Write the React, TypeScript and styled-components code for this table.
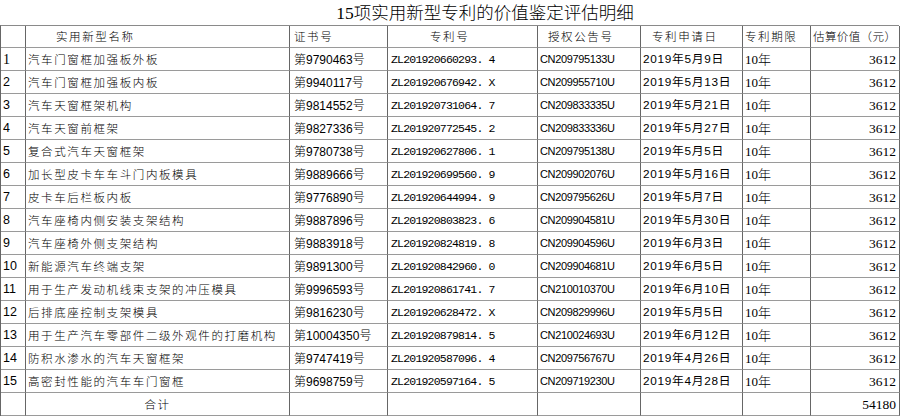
import React from 'react';
import styled, { createGlobalStyle, css } from 'styled-components';

const GlobalStyle = createGlobalStyle`
  html, body {
    margin: 0;
    padding: 0;
    background: #fff;
  }
  body {
    font-family: "Liberation Sans", "Noto Sans CJK SC", sans-serif;
    color: #000;
  }
`;

const Sheet = styled.div`
  width: 900px;
  height: 416px;
  overflow: hidden;
  background: #fff;
`;

const Title = styled.div`
  height: 25px;
  display: flex;
  align-items: center;
  justify-content: center;
  padding-left: 70px;
  padding-top: 2px;
  box-sizing: border-box;
  font-family: "Liberation Serif", "Noto Sans CJK SC", serif;
  font-size: 17.5px;
  font-weight: 300;
  line-height: 1;
`;

const Grid = styled.div`
  display: grid;
  grid-template-columns: 25px 264px 98px 150px 103px 102px 68px 89px;
  grid-template-rows: 22px;
  grid-auto-rows: 23px;
  border-top: 1px solid #8a8a8a;
  border-left: 1px solid #666;
  width: 899px;
  box-sizing: border-box;
`;

type Kind = 'idx' | 'idxSerif' | 'name' | 'cert' | 'mono' | 'cn' | 'date' | 'term' | 'value' | 'head';

const fontFor = (kind: Kind) => {
  switch (kind) {
    case 'idxSerif':
      return css`
        font-family: "Liberation Serif", serif;
        font-size: 14px;
      `;
    case 'idx':
      return css`
        font-size: 12.5px;
      `;
    case 'name':
    case 'head':
      return css`
        font-family: "Noto Sans CJK SC", sans-serif;
        font-size: 11.5px;
        font-weight: 300;
        letter-spacing: 1.6px;
      `;
    case 'cert':
      return css`
        font-size: 12px;
        font-weight: 300;
      `;
    case 'mono':
      return css`
        font-family: "Liberation Mono", monospace;
        font-size: 11.5px;
        letter-spacing: -0.8px;
      `;
    case 'cn':
      return css`
        font-size: 11px;
        letter-spacing: -0.35px;
      `;
    case 'date':
      return css`
        font-size: 11.8px;
        letter-spacing: 0.7px;
      `;
    case 'term':
      return css`
        font-family: "Liberation Serif", "Noto Sans CJK SC", serif;
        font-size: 13px;
        font-weight: 300;
      `;
    case 'value':
      return css`
        font-family: "Liberation Serif", serif;
        font-size: 13.5px;
      `;
  }
};

const Cell = styled.div<{ $kind: Kind; $align?: 'left' | 'right' | 'center'; $indent?: number }>`
  box-sizing: border-box;
  border-right: 1px solid #666;
  border-bottom: 1px solid #9a9a9a;
  display: flex;
  align-items: center;
  justify-content: ${p => (p.$align === 'right' ? 'flex-end' : p.$align === 'center' ? 'center' : 'flex-start')};
  padding: 1px ${p => (p.$align === 'right' ? 3 : 2)}px 0 ${p => p.$indent ?? 2}px;
  white-space: nowrap;
  overflow: hidden;
  line-height: 1;
  ${p => fontFor(p.$kind)}
`;

type Row = [string, string, string, string, string, string];

const rows: Row[] = [
  ['汽车门窗框加强板外板', '第9790463号', 'ZL201920660293. 4', 'CN209795133U', '2019年5月9日', '10年'],
  ['汽车门窗框加强板内板', '第9940117号', 'ZL201920676942. X', 'CN209955710U', '2019年5月13日', '10年'],
  ['汽车天窗框架机构', '第9814552号', 'ZL201920731064. 7', 'CN209833335U', '2019年5月21日', '10年'],
  ['汽车天窗前框架', '第9827336号', 'ZL201920772545. 2', 'CN209833336U', '2019年5月27日', '10年'],
  ['复合式汽车天窗框架', '第9780738号', 'ZL201920627806. 1', 'CN209795138U', '2019年5月5日', '10年'],
  ['加长型皮卡车车斗门内板模具', '第9889666号', 'ZL201920699560. 9', 'CN209902076U', '2019年5月16日', '10年'],
  ['皮卡车后栏板内板', '第9776890号', 'ZL201920644994. 9', 'CN209795626U', '2019年5月7日', '10年'],
  ['汽车座椅内侧安装支架结构', '第9887896号', 'ZL201920803823. 6', 'CN209904581U', '2019年5月30日', '10年'],
  ['汽车座椅外侧支架结构', '第9883918号', 'ZL201920824819. 8', 'CN209904596U', '2019年6月3日', '10年'],
  ['新能源汽车终端支架', '第9891300号', 'ZL201920842960. 0', 'CN209904681U', '2019年6月5日', '10年'],
  ['用于生产发动机线束支架的冲压模具', '第9996593号', 'ZL201920861741. 7', 'CN210010370U', '2019年6月10日', '10年'],
  ['后排底座控制支架模具', '第9816230号', 'ZL201920628472. X', 'CN209829996U', '2019年5月5日', '10年'],
  ['用于生产汽车零部件二级外观件的打磨机构', '第10004350号', 'ZL201920879814. 5', 'CN210024693U', '2019年6月12日', '10年'],
  ['防积水渗水的汽车天窗框架', '第9747419号', 'ZL201920587096. 4', 'CN209756767U', '2019年4月26日', '10年'],
  ['高密封性能的汽车车门窗框', '第9698759号', 'ZL201920597164. 5', 'CN209719230U', '2019年4月28日', '10年'],
];

export default function App() {
  return (
    <Sheet>
      <GlobalStyle />
      <Title>15项实用新型专利的价值鉴定评估明细</Title>
      <Grid>
        <Cell $kind="head" />
        <Cell $kind="head" $indent={30}>实用新型名称</Cell>
        <Cell $kind="head" $indent={4}>证书号</Cell>
        <Cell $kind="head" $indent={42}>专利号</Cell>
        <Cell $kind="head" $indent={10}>授权公告号</Cell>
        <Cell $kind="head" $indent={11}>专利申请日</Cell>
        <Cell $kind="head" $indent={2}>专利期限</Cell>
        <Cell $kind="head" $indent={2} style={{ letterSpacing: '0.4px' }}>估算价值（元）</Cell>
        {rows.map((r, i) => (
          <React.Fragment key={i}>
            <Cell $kind={i === 0 ? 'idxSerif' : 'idx'}>{i + 1}</Cell>
            <Cell $kind="name">{r[0]}</Cell>
            <Cell $kind="cert" $indent={4}>{r[1]}</Cell>
            <Cell $kind="mono" $indent={3}>{r[2]}</Cell>
            <Cell $kind="cn">{r[3]}</Cell>
            <Cell $kind="date">{r[4]}</Cell>
            <Cell $kind="term">{r[5]}</Cell>
            <Cell $kind="value" $align="right">3612</Cell>
          </React.Fragment>
        ))}
        <Cell $kind="idx" />
        <Cell $kind="head" $align="center">合计</Cell>
        <Cell $kind="cert" />
        <Cell $kind="mono" />
        <Cell $kind="cn" />
        <Cell $kind="date" />
        <Cell $kind="term" />
        <Cell $kind="value" $align="right">54180</Cell>
      </Grid>
    </Sheet>
  );
}
